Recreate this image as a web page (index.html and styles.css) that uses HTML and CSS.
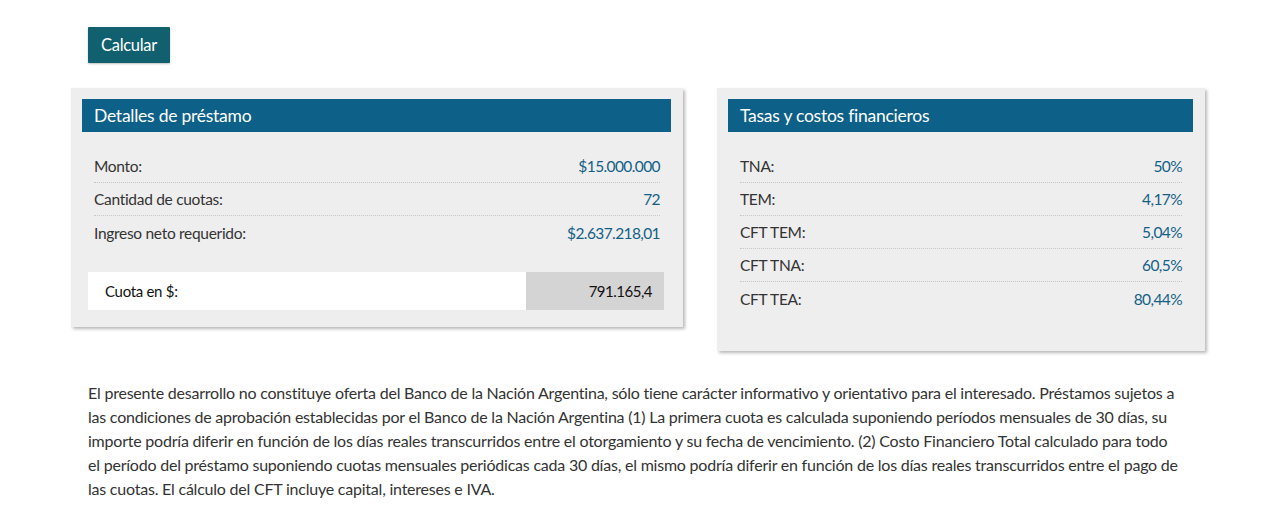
FILE: index.html
```html
<!DOCTYPE html>
<html lang="es">
<head>
<meta charset="utf-8">
<title>Simulador de préstamo</title>
<link rel="stylesheet" href="styles.css">
</head>
<body>
<main class="page">
  <div class="actions">
    <button class="btn" type="button">Calcular</button>
  </div>
  <div class="cards">
    <section class="card card-left">
      <h2 class="card-title">Detalles de préstamo</h2>
      <div class="rows">
        <div class="row"><span class="label">Monto:</span><span class="value">$15.000.000</span></div>
        <div class="row"><span class="label">Cantidad de cuotas:</span><span class="value">72</span></div>
        <div class="row row-last"><span class="label">Ingreso neto requerido:</span><span class="value">$2.637.218,01</span></div>
      </div>
      <div class="cuota">
        <span class="cuota-label">Cuota en $:</span>
        <span class="cuota-value">791.165,4</span>
      </div>
    </section>
    <section class="card card-right">
      <h2 class="card-title">Tasas y costos financieros</h2>
      <div class="rows">
        <div class="row"><span class="label">TNA:</span><span class="value">50%</span></div>
        <div class="row"><span class="label">TEM:</span><span class="value">4,17%</span></div>
        <div class="row"><span class="label">CFT TEM:</span><span class="value">5,04%</span></div>
        <div class="row"><span class="label">CFT TNA:</span><span class="value">60,5%</span></div>
        <div class="row row-last"><span class="label">CFT TEA:</span><span class="value">80,44%</span></div>
      </div>
    </section>
  </div>
  <p class="legal">El presente desarrollo no constituye oferta del Banco de la Nación Argentina, sólo tiene carácter informativo y orientativo para el interesado. Préstamos sujetos a las condiciones de aprobación establecidas por el Banco de la Nación Argentina (1) La primera cuota es calculada suponiendo períodos mensuales de 30 días, su importe podría diferir en función de los días reales transcurridos entre el otorgamiento y su fecha de vencimiento. (2) Costo Financiero Total calculado para todo el período del préstamo suponiendo cuotas mensuales periódicas cada 30 días, el mismo podría diferir en función de los días reales transcurridos entre el pago de las cuotas. El cálculo del CFT incluye capital, intereses e IVA.</p>
</main>
</body>
</html>
```
FILE: styles.css
```css
* { box-sizing: border-box; }
html, body { margin: 0; padding: 0; background: #ffffff; }
body {
  font-family: Lato, "Liberation Sans", sans-serif;
  color: #333333;
  font-size: 16px;
}
.page {
  padding: 27px 0 0 71px;
  width: 1280px;
}
.actions { padding-left: 17px; }
.btn {
  display: block;
  width: 82px;
  height: 36px;
  margin: 0;
  padding: 0;
  border: 0;
  border-radius: 1px;
  background: #10606f;
  color: #ffffff;
  font-family: inherit;
  font-size: 16.5px;
  letter-spacing: -0.3px;
  box-shadow: 0 1px 2px rgba(0,0,0,0.25);
}
.cards {
  display: flex;
  align-items: flex-start;
  gap: 34px;
  margin-top: 25px;
}
.card {
  background: #eeeeee;
  padding: 11px 12px 0 11px;
  box-shadow: 2px 2px 3px rgba(0,0,0,0.28);
}
.card-left { width: 612px; height: 239px; }
.card-right { width: 488px; height: 263px; }
.card-title {
  margin: 0;
  height: 33px;
  padding: 0 12px;
  background: #0d6088;
  color: #ffffff;
  font-size: 17.5px;
  letter-spacing: -0.25px;
  font-weight: normal;
  line-height: 33px;
}
.rows {
  margin-top: 18px;
  padding: 0 11px 0 12px;
}
.row {
  display: flex;
  justify-content: space-between;
  align-items: center;
  height: 33px;
  border-bottom: 1px dotted #c8c8c8;
  font-size: 15.5px;
  letter-spacing: -0.3px;
  color: #333333;
}
.row-last { border-bottom: 0; }
.value { color: #135f86; letter-spacing: -0.6px; }
.cuota {
  display: flex;
  margin: 23px 7px 0 6px;
  height: 38px;
  font-size: 15px;
  color: #111111;
}
.cuota-label {
  flex: 1;
  background: #ffffff;
  display: flex;
  align-items: center;
  padding-left: 17px;
  letter-spacing: -0.3px;
}
.cuota-value {
  width: 138px;
  background: #d4d4d4;
  display: flex;
  align-items: center;
  justify-content: flex-end;
  padding-right: 12px;
  letter-spacing: -0.5px;
}
.legal {
  margin: 30px 0 0 17px;
  width: 1094px;
  font-size: 16px;
  letter-spacing: -0.22px;
  line-height: 24px;
  color: #333333;
}
```
